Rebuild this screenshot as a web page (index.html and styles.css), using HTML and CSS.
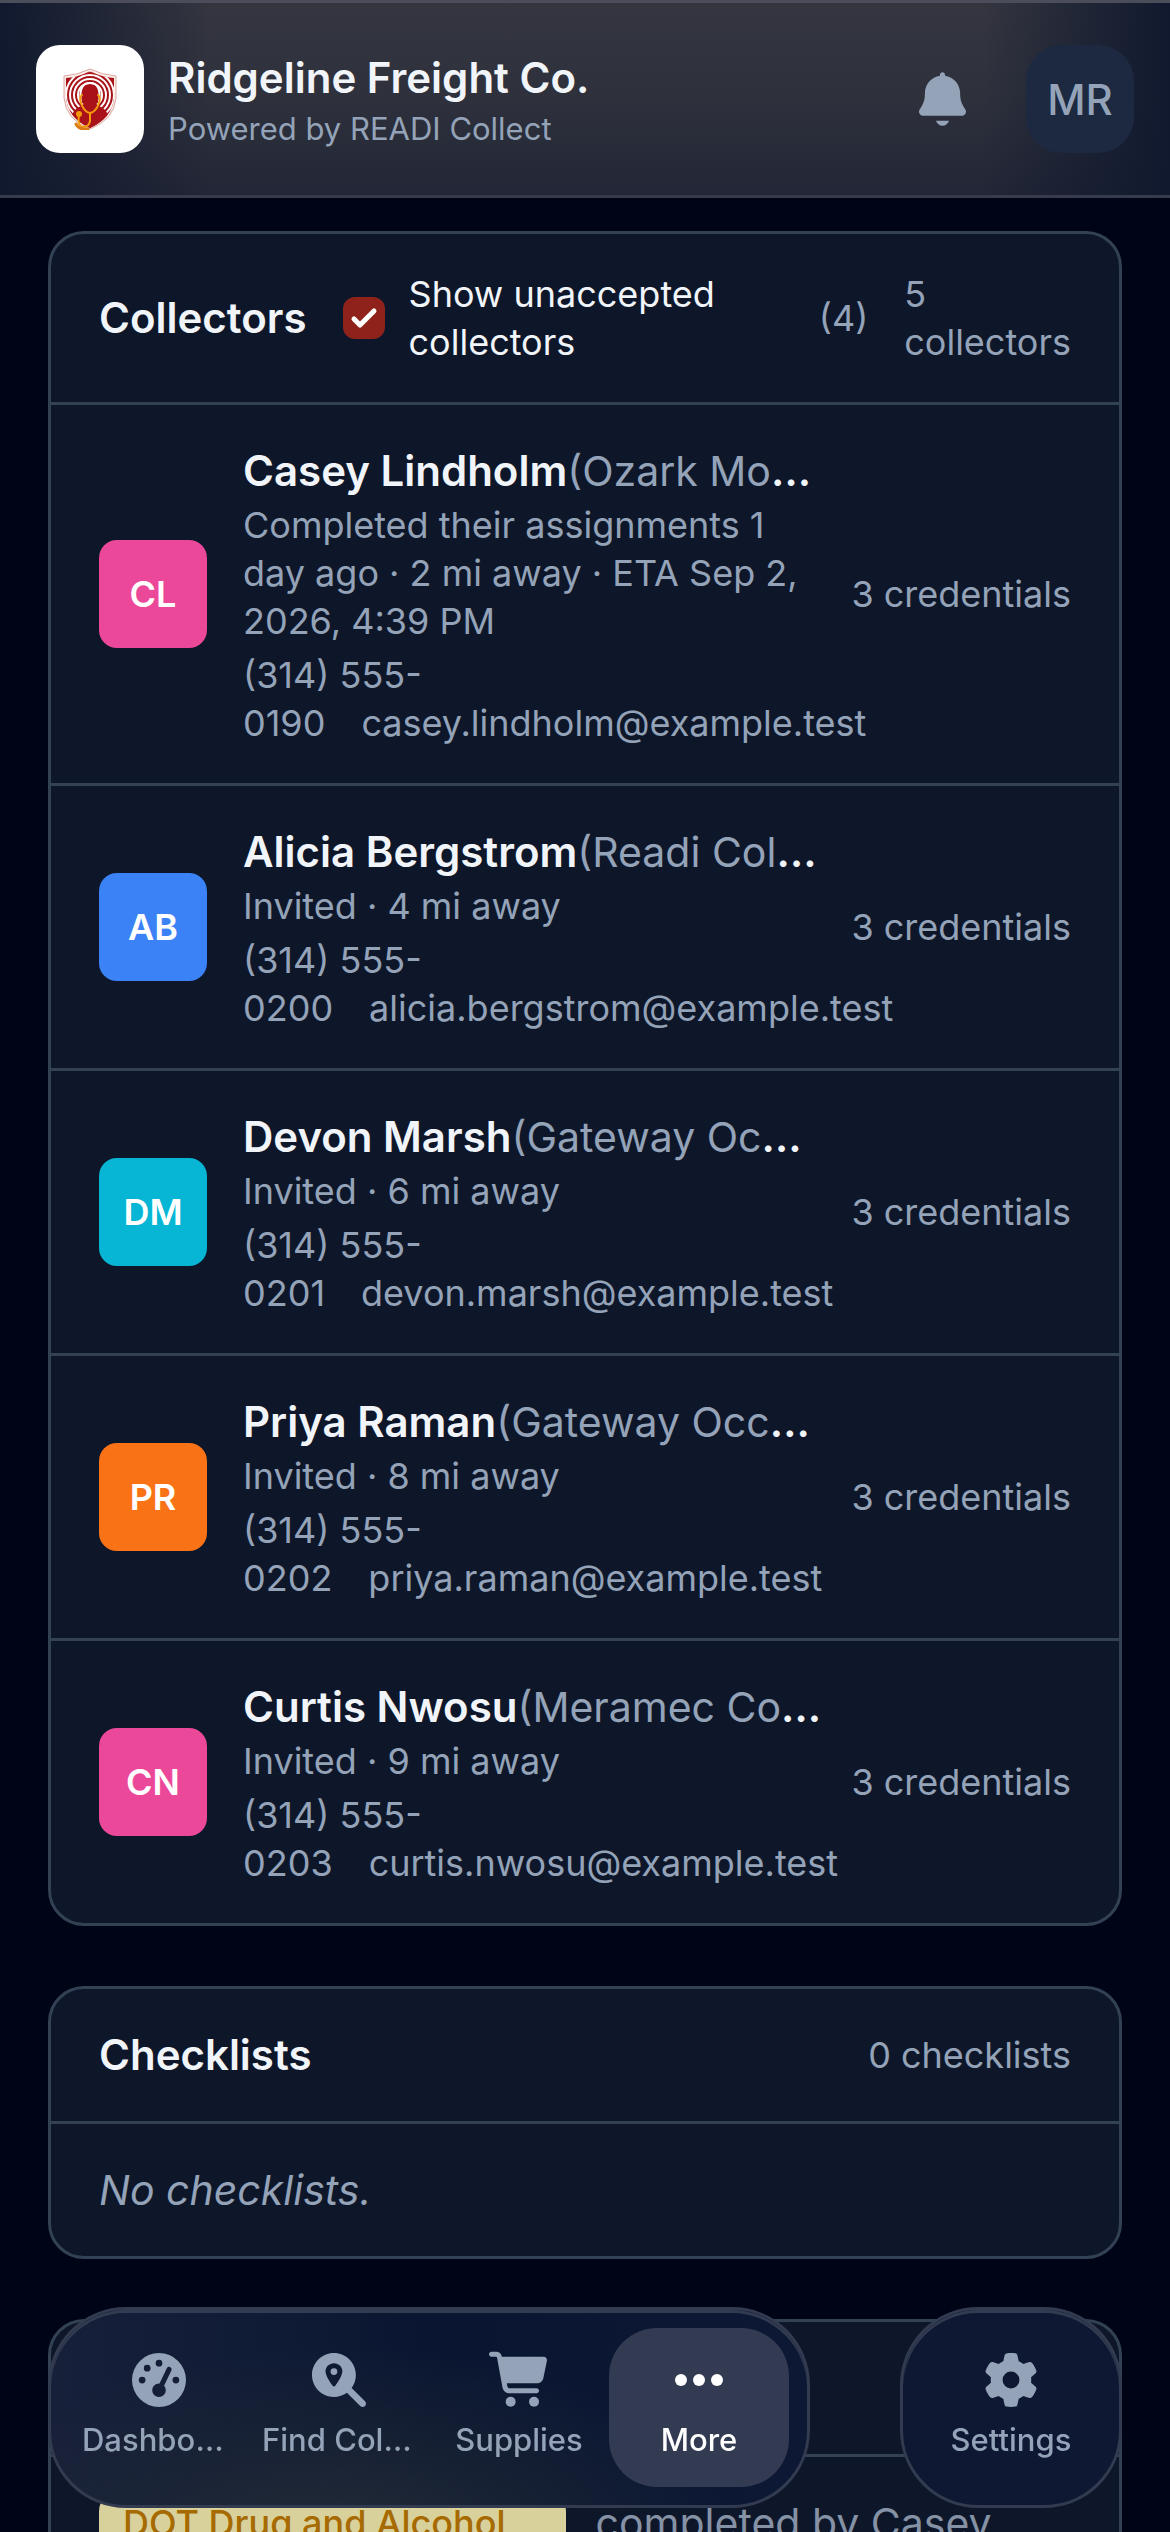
FILE: index.html
```html
<!DOCTYPE html>
<html lang="en">
<head>
<meta charset="UTF-8">
<meta name="viewport" content="width=device-width, initial-scale=1.0">
<title>Ridgeline Freight Co.</title>
<link rel="stylesheet" href="styles.css">
</head>
<body>

<header class="topbar">
  <div class="logo">
    <svg viewBox="0 0 54 62" width="54" height="62">
      <defs>
        <clipPath id="shield">
          <path d="M27 3 Q38 9 51 10 V30 Q49 50 27 60 Q5 50 3 30 V10 Q16 9 27 3z"/>
        </clipPath>
      </defs>
      <path d="M27 1 Q39 7 53 8 V30 Q51 52 27 61 Q3 52 1 30 V8 Q15 7 27 1z" fill="#fbeeea" stroke="#dba89f"/>
      <g clip-path="url(#shield)">
        <rect width="54" height="62" fill="#a81218"/>
        <g fill="none" stroke="#fff" stroke-width="2">
          <circle cx="27" cy="27" r="12"/>
          <circle cx="27" cy="27" r="16"/>
          <circle cx="27" cy="27" r="20"/>
          <circle cx="27" cy="27" r="24"/>
        </g>
        <path d="M8 52 Q9 41 18 38 L22 35 L20 28 Q19 17 27 17 T34 28 L32 35 L36 38 Q45 41 46 52 L27 62z" fill="#a81218"/>
        <path d="M18 35 Q15 15 27 15 T36 35" fill="none" stroke="#fff" stroke-width="2"/>
      </g>
      <g fill="none" stroke="#f59a0b" stroke-width="2" stroke-linecap="round">
        <path d="M19 27 Q16 29 18 35 Q21 44 27 45 Q33 44 36 35 Q38 29 35 27M27 45 V53 Q26 59 20 59 Q14 58 16 47"/>
        <path d="M13 56 Q16 62 25 61" stroke="#d97a16" stroke-width="3"/>
      </g>
      <circle cx="16" cy="46" r="3" fill="#f59a0b"/>
    </svg>
  </div>
  <div class="brand">
    <h1>Ridgeline Freight Co.</h1>
    <p>Powered by READI Collect</p>
  </div>
  <button class="bell" aria-label="Notifications">
    <svg viewBox="0 0 448 512" width="47" height="54" fill="currentColor"><path d="M224 0c-13.300 0-24 10.700-24 24l0 9.700C118.600 45.300 56 115.400 56 200l0 14.500c0 37.700-10 74.700-29 107.300L5.100 359.200C1.800 365 0 371.500 0 378.200 0 399.100 16.900 416 37.800 416l372.400 0c20.900 0 37.800-16.900 37.800-37.800 0-6.700-1.800-13.300-5.100-19L421 321.700c-19-32.600-29-69.600-29-107.300l0-14.500c0-84.600-62.600-154.700-144-166.300l0-9.700c0-13.300-10.700-24-24-24zM162 464h124c-9 28-33 48-62 48s-53-20-62-48z"/></svg>
  </button>
  <button class="profile">MR</button>
</header>

<main class="content">

  <section class="card">
    <div class="card-head">
      <h2>Collectors</h2>
      <input type="checkbox" id="unaccepted" checked>
      <label for="unaccepted">Show unaccepted collectors</label>
      <span class="muted">(4)</span>
      <span class="muted total">5 collectors</span>
    </div>

    <div class="row">
      <div class="avatar pink">CL</div>
      <div class="info">
        <h3>Casey Lindholm<span>(Ozark Mobile Collections)</span></h3>
        <p>Completed their assignments 1 day ago · 2 mi away · ETA Sep 2, 2026, 4:39 PM</p>
        <p class="contact">(314) 555-<wbr>0190<a href="#">casey.lindholm@example.test</a></p>
      </div>
      <span class="muted">3 credentials</span>
    </div>

    <div class="row">
      <div class="avatar blue">AB</div>
      <div class="info">
        <h3>Alicia Bergstrom<span>(Readi Collect)</span></h3>
        <p>Invited · 4 mi away</p>
        <p class="contact">(314) 555-<wbr>0200<a href="#">alicia.bergstrom@example.test</a></p>
      </div>
      <span class="muted">3 credentials</span>
    </div>

    <div class="row">
      <div class="avatar cyan">DM</div>
      <div class="info">
        <h3>Devon Marsh<span>(Gateway Occupational)</span></h3>
        <p>Invited · 6 mi away</p>
        <p class="contact">(314) 555-<wbr>0201<a href="#">devon.marsh@example.test</a></p>
      </div>
      <span class="muted">3 credentials</span>
    </div>

    <div class="row">
      <div class="avatar orange">PR</div>
      <div class="info">
        <h3>Priya Raman<span>(Gateway Occupational)</span></h3>
        <p>Invited · 8 mi away</p>
        <p class="contact">(314) 555-<wbr>0202<a href="#">priya.raman@example.test</a></p>
      </div>
      <span class="muted">3 credentials</span>
    </div>

    <div class="row">
      <div class="avatar pink">CN</div>
      <div class="info">
        <h3>Curtis Nwosu<span>(Meramec Collections)</span></h3>
        <p>Invited · 9 mi away</p>
        <p class="contact">(314) 555-<wbr>0203<a href="#">curtis.nwosu@example.test</a></p>
      </div>
      <span class="muted">3 credentials</span>
    </div>
  </section>

  <section class="card">
    <div class="card-head">
      <h2>Checklists</h2>
      <span class="muted">0 checklists</span>
    </div>
    <p class="empty">No checklists.</p>
  </section>

  <section class="card">
    <div class="card-head history-head"></div>
    <div class="history">
      <span class="tag">DOT Drug and Alcohol</span>
      <p>completed by Casey</p>
    </div>
  </section>

</main>

<nav class="bottom">
  <div class="pill tabs">
    <a href="#" class="tab">
      <svg viewBox="0 0 512 512" width="54" height="54" fill="currentColor"><path fill-rule="evenodd" d="M0 256a256 256 0 1 1 512 0a256 256 0 1 1-512 0zM288 96a32 32 0 1 0-64 0a32 32 0 1 0 64 0zM256 416c35.300 0 64-28.700 64-64c0-16-6-31-16-42l69-144c6-12 1-26-11-32s-26-1-32 11l-69 143h-5c-35.300 0-64 28.700-64 64s28.700 64 64 64zM176 144a32 32 0 1 0-64 0a32 32 0 1 0 64 0zM96 288a32 32 0 1 0 0-64a32 32 0 1 0 0 64zM448 256a32 32 0 1 0-64 0a32 32 0 1 0 64 0z"/></svg>
      <span>Dashboard</span>
    </a>
    <a href="#" class="tab">
      <svg viewBox="0 0 512 512" width="54" height="54" fill="currentColor"><path fill-rule="evenodd" d="M416 208c0 46-15 88-40 123l127 126c12 13 12 33 0 46s-33 12-46 0L331 376c-35 25-77 40-123 40C93 416 0 323 0 208S93 0 208 0s208 93 208 208zM208 96c-44 0-80 34-80 78c0 38 38 98 67 136c7 9 19 9 26 0c29-38 67-98 67-136c0-44-36-78-80-78zm0 48a32 32 0 1 1 0 64a32 32 0 1 1 0-64z"/></svg>
      <span>Find Collectors</span>
    </a>
    <a href="#" class="tab">
      <svg viewBox="0 0 576 512" width="60" height="54" fill="currentColor"><path d="M24-16C10.700-16 0-5.300 0 8s10.700 24 24 24h45c4 0 7 3 8 7l52 286c6 34 36 59 71 59h256c13 0 24-11 24-24s-11-24-24-24H200c-12 0-22-8-24-20l-5-28h288c31 0 57-22 63-52l34-166c4-20-11-38-31-38H124l-1-2C118 3 96-16 69-16H24z"/><circle cx="208" cy="464" r="48"/><circle cx="432" cy="464" r="48"/></svg>
      <span>Supplies</span>
    </a>
    <a href="#" class="tab active">
      <svg viewBox="0 0 48 54" width="48" height="54" fill="currentColor"><circle cx="6" cy="27" r="6"/><circle cx="24" cy="27" r="6"/><circle cx="42" cy="27" r="6"/></svg>
      <span>More</span>
    </a>
  </div>
  <div class="pill">
    <a href="#" class="tab">
      <svg viewBox="0 0 512 512" width="58" height="58" fill="currentColor"><path d="M495.900 166.600c3.200 8.700.5 18.400-6.400 24.600l-43.300 39.400c1.100 8.300 1.700 16.800 1.700 25.400s-.6 17.100-1.700 25.400l43.300 39.400c6.900 6.200 9.600 15.900 6.400 24.600c-4.400 11.900-9.700 23.300-15.800 34.300l-4.700 8.100c-6.600 11-14 21.400-22.100 31.200c-5.900 7.200-15.700 9.600-24.500 6.800l-55.700-17.700c-13.400 10.300-28.200 18.900-44 25.400l-12.500 57.100c-2 9.100-9 16.300-18.200 17.800c-13.800 2.300-28 3.500-42.500 3.500s-28.700-1.200-42.500-3.500c-9.200-1.500-16.200-8.700-18.200-17.800l-12.500-57.100c-15.800-6.500-30.600-15.100-44-25.400L83.100 425.900c-8.800 2.800-18.600.3-24.500-6.800c-8.100-9.800-15.500-20.200-22.100-31.200l-4.700-8.100c-6.100-11-11.400-22.400-15.800-34.300c-3.200-8.700-.5-18.400 6.400-24.600l43.300-39.400C64.600 273.100 64 264.600 64 256s.6-17.100 1.700-25.400L22.400 191.200c-6.900-6.200-9.600-15.900-6.400-24.600c4.400-11.900 9.700-23.300 15.800-34.300l4.700-8.100c6.600-11 14-21.400 22.100-31.200c5.900-7.200 15.700-9.600 24.500-6.800l55.700 17.700c13.400-10.300 28.200-18.900 44-25.400l12.500-57.100c2-9.100 9-16.300 18.200-17.800C227.300 1.200 241.500 0 256 0s28.700 1.200 42.500 3.500c9.200 1.500 16.200 8.700 18.200 17.800l12.500 57.100c15.800 6.500 30.600 15.100 44 25.400l55.700-17.700c8.800-2.800 18.600-.3 24.500 6.800c8.100 9.800 15.500 20.200 22.100 31.200l4.700 8.100c6.100 11 11.400 22.400 15.800 34.300zM256 336a80 80 0 1 0 0-160a80 80 0 1 0 0 160z"/></svg>
      <span>Settings</span>
    </a>
  </div>
</nav>

</body>
</html>
```
FILE: styles.css
```css
:root {
  --page: #000417;
  --card: #0e172a;
  --line: #334155;
  --text: #f1f5f9;
  --muted: #94a3b8;
  --glass-line: #333b50;
}

* {
  box-sizing: border-box;
}

body {
  margin: 0;
  height: 100vh;
  display: flex;
  flex-direction: column;
  background: var(--page);
  color: var(--text);
  font-family: Inter, "Liberation Sans", sans-serif;
  font-size: 36px;
  line-height: 48px;
}

h1, h2, h3, p {
  margin: 0;
}

h1, h2, h3 {
  font-size: 42px;
  line-height: 60px;
  font-weight: 600;
}

a {
  color: inherit;
  text-decoration: none;
}

button {
  border: none;
  padding: 0;
  font-family: inherit;
  color: var(--muted);
  cursor: pointer;
}

svg {
  display: block;
}

/* top bar */
.topbar {
  display: flex;
  align-items: center;
  flex-shrink: 0;
  height: 198px;
  padding: 0 36px;
  border-top: 3px solid #4b4e5a;
  border-bottom: 3px solid #373b4b;
  background:
    linear-gradient(to right, #10192e, transparent 18%, transparent 84%, #10192e),
    linear-gradient(#34353f, #2e313c 50%, #222636);
}

.logo {
  display: flex;
  align-items: center;
  justify-content: center;
  width: 108px;
  height: 108px;
  border-radius: 24px;
  background: #fff;
}

.brand {
  flex: 1;
  margin-left: 24px;
  padding-top: 6px;
}

.brand h1 {
  line-height: 54px;
}

.brand p {
  font-size: 31px;
  color: var(--muted);
}

.bell {
  background: none;
  margin-right: 60px;
}

.profile {
  width: 108px;
  height: 108px;
  border-radius: 36px;
  background: #1c2940;
  font-size: 42px;
  font-weight: 500;
}

/* cards */
.content {
  flex: 1;
  display: flex;
  flex-direction: column;
  gap: 60px;
  padding: 33px 48px 0;
  overflow-y: auto;
  scrollbar-width: none;
}

.card {
  flex-shrink: 0;
  border: 3px solid var(--line);
  border-radius: 36px;
  background: var(--card);
}

.card-head,
.row {
  display: flex;
  align-items: center;
  padding: 36px 48px;
}

.card-head {
  justify-content: space-between;
  gap: 36px;
}

.card-head label {
  flex: 1;
  margin-left: -12px;
}

.muted {
  color: var(--muted);
  white-space: nowrap;
}

.total {
  width: min-content;
  white-space: normal;
}

input[type="checkbox"] {
  appearance: none;
  flex-shrink: 0;
  width: 42px;
  height: 42px;
  margin: 0;
  border-radius: 12px;
  background: #8f231c;
}

input[type="checkbox"]:checked {
  background-image: url("data:image/svg+xml,%3Csvg xmlns='http://www.w3.org/2000/svg' viewBox='0 0 42 42' fill='none' stroke='white' stroke-width='5' stroke-linecap='round' stroke-linejoin='round'%3E%3Cpath d='M11 22l6 6 14-14'/%3E%3C/svg%3E");
}

.row {
  gap: 30px;
  border-top: 3px solid var(--line);
}

.avatar {
  display: grid;
  place-items: center;
  flex-shrink: 0;
  width: 108px;
  height: 108px;
  margin-right: 6px;
  border-radius: 18px;
  color: #fff;
  font-weight: 600;
}

.pink { background: #ec4899; }
.blue { background: #3b82f6; }
.cyan { background: #06b6d4; }
.orange { background: #f97316; }

.info {
  flex: 1;
  min-width: 0;
}

.info h3 {
  overflow: hidden;
  white-space: nowrap;
  text-overflow: ellipsis;
}

.info h3 span {
  color: var(--muted);
  font-size: 41px;
  font-weight: 400;
}

.info p {
  color: var(--muted);
}

.info .contact {
  margin-top: 6px;
}

.contact a {
  margin-left: 36px;
}

.empty {
  padding: 36px 48px;
  border-top: 3px solid var(--line);
  color: var(--muted);
  font-size: 41px;
  line-height: 60px;
  font-style: italic;
}

.history-head {
  height: 132px;
}

.history {
  display: flex;
  align-items: center;
  gap: 30px;
  padding: 36px 48px;
  border-top: 3px solid var(--line);
  color: #8592a5;
  font-size: 41px;
  line-height: 60px;
}

.tag {
  flex: 0 0 48%;
  padding: 6px 24px;
  border-radius: 18px;
  background: #d8d19c;
  color: #a66a00;
  font-size: 36px;
  line-height: 48px;
  font-weight: 500;
}

/* bottom navigation, floats over the content */
.bottom {
  position: fixed;
  left: 48px;
  right: 48px;
  bottom: 24px;
  display: flex;
  justify-content: space-between;
}

.pill {
  display: flex;
  padding: 18px;
  border: 3px solid var(--glass-line);
  border-radius: 78px;
  background: #0e1833;
  box-shadow: inset 0 3px 0 var(--glass-line);
}

.tabs {
  background:
    radial-gradient(ellipse at 38% 120%, #222b36, transparent 60%),
    linear-gradient(to right, #172039, #0a1631 50%, #0c1834);
}

.tab {
  display: flex;
  flex-direction: column;
  align-items: center;
  justify-content: center;
  gap: 10px;
  width: 180px;
  height: 159px;
  border-radius: 48px;
  color: var(--muted);
  font-size: 31px;
  line-height: 46px;
  font-weight: 500;
}

.tab svg {
  height: 54px;
  overflow: visible;
}

.tab span {
  max-width: 154px;
  overflow: hidden;
  white-space: nowrap;
  text-overflow: ellipsis;
}

.tab.active {
  background: #333b53;
  color: #fff;
}
```
